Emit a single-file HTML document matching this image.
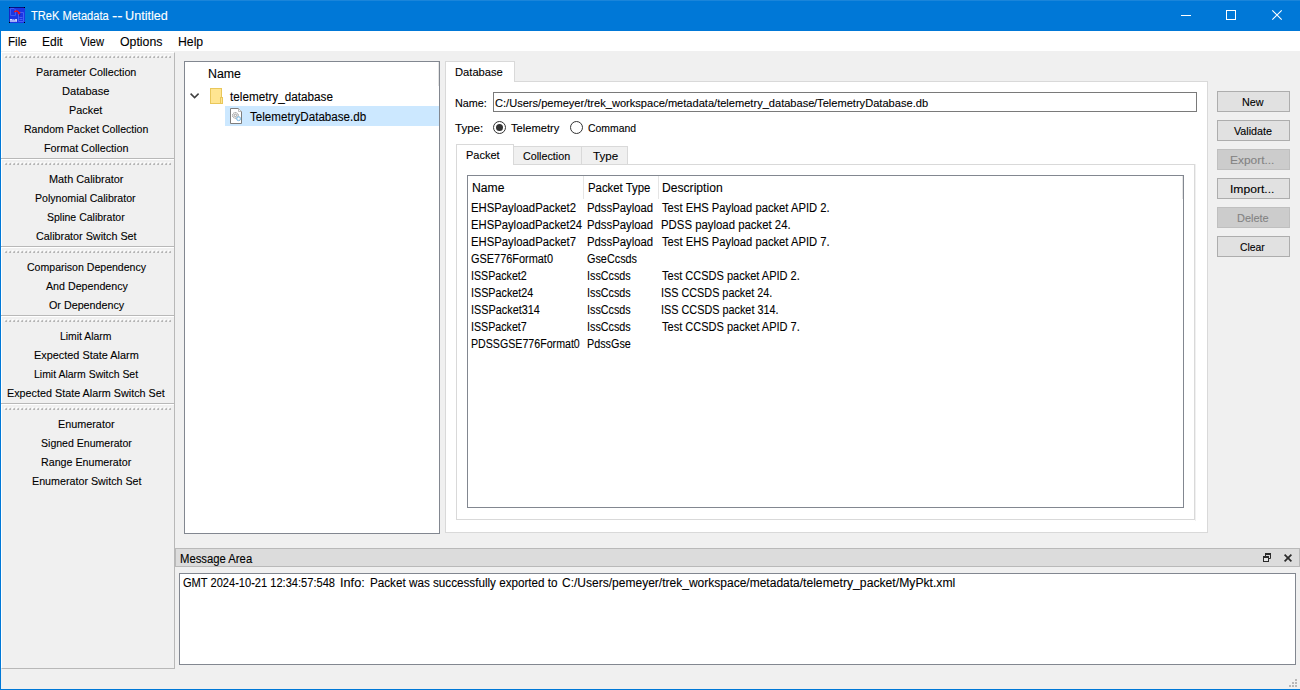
<!DOCTYPE html>
<html lang="en">
<head>
<meta charset="utf-8">
<title>TReK Metadata -- Untitled</title>
<style>
html,body{margin:0;padding:0;}
body{width:1300px;height:690px;overflow:hidden;background:#f0f0f0;position:relative;font-family:"Liberation Sans",sans-serif;font-size:12px;color:#000;}
.a{position:absolute;box-sizing:border-box;}
.t{position:absolute;white-space:pre;line-height:16px;height:16px;transform-origin:0 0;display:block;-webkit-text-stroke:0.1px currentColor;}
.g{position:absolute;white-space:pre;line-height:16px;height:16px;}
.ti{display:inline-block;white-space:pre;line-height:16px;height:16px;transform-origin:0 0;-webkit-text-stroke:0.1px currentColor;vertical-align:top;}
#title{left:0;top:0;width:1300px;height:31px;background:#0078d7;}
#menu{left:1px;top:31px;width:1299px;height:20px;background:#fff;}
#lb{left:0;top:31px;width:1px;height:659px;background:#0078d7;}
#bb{left:0;top:689px;width:1300px;height:1px;background:#0078d7;}
#side{left:1px;top:52px;width:174px;height:617px;border-right:1px solid #b8b8b8;border-bottom:1px solid #b8b8b8;border-left:1px solid #fff;border-top:1px solid #fff;}
.sep{position:absolute;left:1px;width:173px;height:2px;border-top:1px solid #b8b8b8;border-bottom:1px solid #fff;box-sizing:border-box;}
.grip{position:absolute;left:4px;width:168px;height:3px;}
#tree{left:184px;top:61px;width:256px;height:473px;background:#fff;border:1px solid #828790;}
#sel{left:225px;top:106px;width:214px;height:20px;background:#cce8ff;}
#pane{left:445px;top:81px;width:763px;height:452px;background:#fff;border:1px solid #d9d9d9;}
#tabDb{left:445px;top:61px;width:70px;height:21px;background:#fff;border:1px solid #d9d9d9;border-bottom:none;}
#inp{left:493px;top:92px;width:704px;height:20px;background:#fff;border:1px solid #7a7a7a;}
.radio{position:absolute;width:13px;height:13px;border-radius:50%;border:1px solid #333;background:#fff;box-sizing:border-box;}
#ipane{left:456px;top:164px;width:739px;height:356px;background:#fff;border:1px solid #d9d9d9;}
.itab{position:absolute;box-sizing:border-box;border:1px solid #d9d9d9;background:#f0f0f0;top:146px;height:19px;}
#tabPk{left:456px;top:144px;width:58px;height:21px;background:#fff;border:1px solid #d9d9d9;border-bottom:none;}
#table{left:467px;top:175px;width:717px;height:333px;background:#fff;border:1px solid #828790;}
.btn{position:absolute;left:1217px;width:73px;height:21px;box-sizing:border-box;background:#e1e1e1;border:1px solid #adadad;}
.btn.dis{background:#cccccc;border-color:#bfbfbf;}
#mtitle{left:175px;top:548px;width:1125px;height:19px;background:#dcdcdc;border:1px solid #b9b9b9;}
#mbox{left:179px;top:573px;width:1117px;height:92px;background:#fff;border:1px solid #828790;}
</style>
</head>
<body>
<svg width="0" height="0" style="position:absolute"><defs><pattern id="gp" x="0" y="0" width="4" height="3" patternUnits="userSpaceOnUse">
<rect x="0" y="0" width="2" height="1" fill="#f9f9f9"/><rect x="0" y="1" width="1" height="1" fill="#fdfdfd"/><rect x="1" y="1" width="1" height="1" fill="#dcdcdc"/><rect x="2" y="1" width="1" height="1" fill="#bcbcbc"/>
<rect x="1" y="2" width="1" height="1" fill="#bcbcbc"/><rect x="2" y="2" width="1" height="1" fill="#b4b4b4"/></pattern></defs></svg>
<div id="title" class="a"></div>
<div class="a" style="left:0;top:0;width:1300px;height:1px;background:#1a85da"></div>
<div id="menu" class="a"></div>
<div id="lb" class="a"></div>
<div id="bb" class="a"></div>
<div id="side" class="a"></div>
<svg class="grip" style="top:55px" width="168" height="3"><rect width="168" height="3" fill="url(#gp)"/></svg>
<div class="sep" style="top:158px"></div>
<svg class="grip" style="top:162px" width="168" height="3"><rect width="168" height="3" fill="url(#gp)"/></svg>
<div class="sep" style="top:246px"></div>
<svg class="grip" style="top:250px" width="168" height="3"><rect width="168" height="3" fill="url(#gp)"/></svg>
<div class="sep" style="top:315px"></div>
<svg class="grip" style="top:319px" width="168" height="3"><rect width="168" height="3" fill="url(#gp)"/></svg>
<div class="sep" style="top:403px"></div>
<svg class="grip" style="top:407px" width="168" height="3"><rect width="168" height="3" fill="url(#gp)"/></svg>
<div id="tree" class="a"></div>
<div id="sel" class="a"></div>
<div id="pane" class="a"></div>
<div id="tabDb" class="a"></div>
<div id="inp" class="a"></div>
<div class="radio" style="left:493px;top:121px"></div>
<div class="radio" style="left:570px;top:121px"></div>
<div id="ipane" class="a"></div>
<div class="a" style="left:1195px;top:164px;width:1px;height:357px;background:#f0f0f0"></div>
<div class="itab" style="left:513px;width:69px"></div>
<div class="itab" style="left:581px;width:47px"></div>
<div id="tabPk" class="a"></div>
<div id="table" class="a"></div>
<div class="btn" style="top:91px"></div>
<div class="btn" style="top:120px"></div>
<div class="btn dis" style="top:149px"></div>
<div class="btn" style="top:178px"></div>
<div class="btn dis" style="top:207px"></div>
<div class="btn" style="top:236px"></div>

<div id="mtitle" class="a"></div>
<div id="mbox" class="a"></div>
<!-- app icon -->
<svg class="a" style="left:9px;top:7px" width="16" height="16" viewBox="0 0 16 16">
<rect x="0" y="0" width="16" height="16" fill="#1b36e3"/>
<rect x="0" y="0" width="16" height="1" fill="#070f80"/>
<rect x="0" y="0" width="1" height="16" fill="#1428c4"/>
<rect x="0" y="0" width="1" height="1" fill="#000"/><rect x="15" y="0" width="1" height="1" fill="#000"/><rect x="0" y="15" width="1" height="1" fill="#000"/><rect x="15" y="15" width="1" height="1" fill="#000"/>
<path d="M1.500 1.500h3.500l1.500 1.500v5.500h-5z" fill="none" stroke="#3f5cf2" stroke-width="1"/>
<path d="M9.500 5.500h5v9h-5z" fill="none" stroke="#4562f3" stroke-width="1"/>
<path d="M10.500 10.500h3M10.500 12.500h3" stroke="#4562f3" stroke-width="1"/>
<path d="M10.300 7.900l1.300-0.700l-0.900 1.200z" fill="#101010"/>
<path d="M4.900 4.700C6.300 2.700 9 2.500 10.300 5.200L11.400 4.900L10.700 7.800L8.300 6.300L9.200 5.900C8.400 4.400 6.800 4.300 5.500 5.400Z" fill="#f01414"/>
<path d="M1 12h2.500v1h-2.500zM1 13.300h5v1.400h-5z" fill="#cfd6ff"/>
<rect x="6.300" y="12" width="1.500" height="2.800" fill="#fff"/>
<rect x="4" y="12.300" width="1.500" height="0.800" fill="#b8c2ff"/>
</svg>
<!-- window controls -->
<svg class="a" style="left:1170px;top:0" width="130" height="31" viewBox="0 0 130 31">
<path d="M11 15.5h10" stroke="#fff" stroke-width="1"/>
<rect x="56.5" y="10.5" width="9" height="9" fill="none" stroke="#fff" stroke-width="1"/>
<path d="M102.3 10.3l9.4 9.4M111.7 10.3l-9.4 9.4" stroke="#fff" stroke-width="1.1"/>
</svg>
<!-- tree icons -->
<svg class="a" style="left:188px;top:86px" width="60" height="40" viewBox="0 0 60 40">
<path d="M2.6 7.6l4 4l4-4" fill="none" stroke="#404040" stroke-width="1.5"/>
<rect x="22.5" y="2.5" width="11" height="15" fill="#ffe591" stroke="#e9c75a" stroke-width="1"/>
<rect x="32.5" y="11.5" width="2" height="6" fill="#ffe591" stroke="#e9c75a" stroke-width="1"/>
<path d="M42.500 22.500h8l3 3v12h-11z" fill="#fff" stroke="#7d7d7d" stroke-width="1"/>
<path d="M50.500 22.500v3h3" fill="#f6f6f6" stroke="#a8a8a8" stroke-width="0.800"/>
<circle cx="47.400" cy="29.400" r="2.900" fill="#ececec" stroke="#8c8c8c" stroke-width="0.900" stroke-dasharray="1.300 0.500"/>
<circle cx="47.400" cy="29.400" r="1.200" fill="#fafafa" stroke="#8c8c8c" stroke-width="0.700"/>
<circle cx="50.600" cy="32.700" r="2" fill="#dbeefb" stroke="#73b4e2" stroke-width="0.900"/>
<circle cx="50.600" cy="32.700" r="0.700" fill="#fff"/>
</svg>
<!-- header separators -->
<div class="a" style="left:438px;top:62px;width:1px;height:24px;background:#e5e5e5"></div>
<div class="a" style="left:583px;top:176px;width:1px;height:23px;background:#e5e5e5"></div>
<div class="a" style="left:658px;top:176px;width:1px;height:23px;background:#e5e5e5"></div>
<div class="a" style="left:1182px;top:176px;width:1px;height:23px;background:#e5e5e5"></div>
<!-- radio dot -->
<div class="a" style="left:496px;top:124px;width:7px;height:7px;border-radius:50%;background:#333"></div>
<!-- message area icons -->
<svg class="a" style="left:1260px;top:550px" width="36" height="16" viewBox="0 0 36 16">
<path d="M5.500 6v-2.500h5v5h-1.500" fill="none" stroke="#2b2b2b" stroke-width="1"/>
<rect x="5" y="3" width="6" height="2" fill="#2b2b2b"/>
<rect x="3.500" y="6.500" width="5" height="5" fill="#e6e6e6" stroke="#2b2b2b" stroke-width="1"/>
<rect x="3" y="6" width="6" height="2" fill="#2b2b2b"/>
<path d="M24.600 4.600l6.800 6.800M31.400 4.600l-6.800 6.800" stroke="#2b2b2b" stroke-width="1.700"/>
</svg>
<!-- size grip -->
<svg class="a" style="left:1286px;top:676px" width="12" height="12" viewBox="0 0 12 12">
<g fill="#b8b8b8"><rect x="9" y="3" width="2" height="2"/><rect x="6" y="6" width="2" height="2"/><rect x="9" y="6" width="2" height="2"/><rect x="3" y="9" width="2" height="2"/><rect x="6" y="9" width="2" height="2"/><rect x="9" y="9" width="2" height="2"/></g>
</svg>

<div class="g" style="left:30.93px;top:8.30px"><span class="ti" style="color:#fff;transform:scaleX(0.9246);margin-right:-6.10px">TReK Metadata </span><span class="ti" style="color:#fff;transform:scaleX(1.3364);margin-right:1.28px">-- </span><span class="ti" style="color:#fff;transform:scaleX(1.0544)">Untitled</span></div>
<span class="t" style="left:8.39px;top:33.80px;transform:scaleX(0.9714)">File</span>
<span class="t" style="left:42.26px;top:33.80px;transform:scaleX(1.0009)">Edit</span>
<span class="t" style="left:79.50px;top:33.80px;transform:scaleX(0.9291)">View</span>
<span class="t" style="left:119.92px;top:33.80px;transform:scaleX(1.0268)">Options</span>
<span class="t" style="left:177.54px;top:33.80px;transform:scaleX(1.0191)">Help</span>
<span class="t" style="left:36.46px;top:63.50px;font-size:11px;transform:scaleX(0.9769)">Parameter Collection</span>
<span class="t" style="left:62.23px;top:82.50px;font-size:11px;transform:scaleX(1.0091)">Database</span>
<span class="t" style="left:69.45px;top:101.50px;font-size:11px;transform:scaleX(0.9876)">Packet</span>
<span class="t" style="left:24.28px;top:120.50px;font-size:11px;transform:scaleX(0.9591)">Random Packet Collection</span>
<span class="t" style="left:44.46px;top:139.50px;font-size:11px;transform:scaleX(0.9797)">Format Collection</span>
<span class="t" style="left:48.65px;top:170.50px;font-size:11px;transform:scaleX(0.9895)">Math Calibrator</span>
<span class="t" style="left:35.37px;top:189.50px;font-size:11px;transform:scaleX(0.9621)">Polynomial Calibrator</span>
<span class="t" style="left:47.17px;top:208.50px;font-size:11px;transform:scaleX(0.9553)">Spline Calibrator</span>
<span class="t" style="left:36.00px;top:227.50px;font-size:11px;transform:scaleX(0.9792)">Calibrator Switch Set</span>
<span class="t" style="left:27.11px;top:258.50px;font-size:11px;transform:scaleX(0.9587)">Comparison Dependency</span>
<span class="t" style="left:45.50px;top:277.50px;font-size:11px;transform:scaleX(0.9704)">And Dependency</span>
<span class="t" style="left:49.00px;top:296.50px;font-size:11px;transform:scaleX(0.9761)">Or Dependency</span>
<span class="t" style="left:60.49px;top:327.50px;font-size:11px;transform:scaleX(0.9463)">Limit Alarm</span>
<span class="t" style="left:33.65px;top:346.50px;font-size:11px;transform:scaleX(0.9899)">Expected State Alarm</span>
<span class="t" style="left:33.68px;top:365.50px;font-size:11px;transform:scaleX(0.9514)">Limit Alarm Switch Set</span>
<span class="t" style="left:7.26px;top:384.50px;font-size:11px;transform:scaleX(0.9808)">Expected State Alarm Switch Set</span>
<span class="t" style="left:57.56px;top:415.50px;font-size:11px;transform:scaleX(0.9831)">Enumerator</span>
<span class="t" style="left:41.07px;top:434.50px;font-size:11px;transform:scaleX(0.9589)">Signed Enumerator</span>
<span class="t" style="left:40.57px;top:453.50px;font-size:11px;transform:scaleX(0.9704)">Range Enumerator</span>
<span class="t" style="left:31.66px;top:472.50px;font-size:11px;transform:scaleX(0.9734)">Enumerator Switch Set</span>
<span class="t" style="left:208.33px;top:65.70px;transform:scaleX(1.0299)">Name</span>
<span class="t" style="left:229.80px;top:88.60px;transform:scaleX(0.9770)">telemetry_database</span>
<span class="t" style="left:250.02px;top:108.80px;transform:scaleX(0.9674)">TelemetryDatabase.db</span>
<span class="t" style="left:455.13px;top:63.80px;font-size:11px;transform:scaleX(1.0157)">Database</span>
<span class="t" style="left:454.76px;top:94.80px;font-size:11px;transform:scaleX(0.9821)">Name:</span>
<div class="g" style="left:494.88px;top:94.80px"><span class="ti" style="font-size:11px;transform:scaleX(1.0065);margin-right:2.21px">C:/Users/pemeyer/trek_workspace/metadata/telemetry_database</span><span class="ti" style="font-size:11px;transform:scaleX(1.0083)">/TelemetryDatabase.db</span></div>
<span class="t" style="left:455.42px;top:120.20px;font-size:11px;transform:scaleX(1.0490)">Type:</span>
<span class="t" style="left:510.93px;top:120.20px;font-size:11px;transform:scaleX(1.0125)">Telemetry</span>
<span class="t" style="left:588.01px;top:120.20px;font-size:11px;transform:scaleX(0.9474)">Command</span>
<span class="t" style="left:466.34px;top:147.00px;font-size:11px;transform:scaleX(0.9998)">Packet</span>
<span class="t" style="left:523.00px;top:148.00px;font-size:11px;transform:scaleX(0.9752)">Collection</span>
<span class="t" style="left:592.82px;top:148.00px;font-size:11px;transform:scaleX(1.0547)">Type</span>
<span class="t" style="left:471.85px;top:179.70px;transform:scaleX(1.0135)">Name</span>
<span class="t" style="left:587.71px;top:179.70px;transform:scaleX(0.9472)">Packet Type</span>
<span class="t" style="left:662.45px;top:179.70px;transform:scaleX(1.0101)">Description</span>
<span class="t" style="left:470.52px;top:199.80px;transform:scaleX(0.9429)">EHSPayloadPacket2</span>
<span class="t" style="left:586.61px;top:199.80px;transform:scaleX(0.9440)">PdssPayload</span>
<span class="t" style="left:661.82px;top:199.80px;transform:scaleX(0.9339)">Test EHS Payload packet APID 2.</span>
<span class="t" style="left:470.52px;top:216.80px;transform:scaleX(0.9398)">EHSPayloadPacket24</span>
<span class="t" style="left:586.61px;top:216.80px;transform:scaleX(0.9440)">PdssPayload</span>
<span class="t" style="left:661.11px;top:216.80px;transform:scaleX(0.9478)">PDSS payload packet 24.</span>
<span class="t" style="left:470.52px;top:233.80px;transform:scaleX(0.9429)">EHSPayloadPacket7</span>
<span class="t" style="left:586.61px;top:233.80px;transform:scaleX(0.9440)">PdssPayload</span>
<span class="t" style="left:661.82px;top:233.80px;transform:scaleX(0.9339)">Test EHS Payload packet APID 7.</span>
<span class="t" style="left:470.89px;top:250.80px;transform:scaleX(0.9105)">GSE776Format0</span>
<span class="t" style="left:586.99px;top:250.80px;transform:scaleX(0.9042)">GseCcsds</span>
<span class="t" style="left:470.57px;top:267.80px;transform:scaleX(0.8894)">ISSPacket2</span>
<span class="t" style="left:586.66px;top:267.80px;transform:scaleX(0.8974)">IssCcsds</span>
<span class="t" style="left:661.83px;top:267.80px;transform:scaleX(0.9180)">Test CCSDS packet APID 2.</span>
<span class="t" style="left:470.56px;top:284.80px;transform:scaleX(0.8982)">ISSPacket24</span>
<span class="t" style="left:586.66px;top:284.80px;transform:scaleX(0.8974)">IssCcsds</span>
<span class="t" style="left:661.15px;top:284.80px;transform:scaleX(0.9022)">ISS CCSDS packet 24.</span>
<span class="t" style="left:470.55px;top:301.80px;transform:scaleX(0.9049)">ISSPacket314</span>
<span class="t" style="left:586.66px;top:301.80px;transform:scaleX(0.8974)">IssCcsds</span>
<span class="t" style="left:661.15px;top:301.80px;transform:scaleX(0.9036)">ISS CCSDS packet 314.</span>
<span class="t" style="left:470.57px;top:318.80px;transform:scaleX(0.8894)">ISSPacket7</span>
<span class="t" style="left:586.66px;top:318.80px;transform:scaleX(0.8974)">IssCcsds</span>
<span class="t" style="left:661.83px;top:318.80px;transform:scaleX(0.9180)">Test CCSDS packet APID 7.</span>
<span class="t" style="left:470.57px;top:335.80px;transform:scaleX(0.8865)">PDSSGSE776Format0</span>
<span class="t" style="left:586.66px;top:335.80px;transform:scaleX(0.8992)">PdssGse</span>
<span class="t" style="left:1241.86px;top:93.80px;font-size:11px;transform:scaleX(0.9774)">New</span>
<span class="t" style="left:1233.60px;top:122.80px;font-size:11px;transform:scaleX(0.9769)">Validate</span>
<span class="t" style="left:1230.27px;top:151.80px;font-size:11px;color:#838383;transform:scaleX(1.0842)">Export...</span>
<span class="t" style="left:1230.25px;top:180.80px;font-size:11px;transform:scaleX(1.1016)">Import...</span>
<span class="t" style="left:1236.54px;top:209.80px;font-size:11px;color:#838383;transform:scaleX(0.9970)">Delete</span>
<span class="t" style="left:1240.21px;top:238.80px;font-size:11px;transform:scaleX(0.9410)">Clear</span>
<span class="t" style="left:179.92px;top:550.80px;transform:scaleX(0.9410)">Message Area</span>
<div class="g" style="left:183.28px;top:574.60px"><span class="ti" style="transform:scaleX(0.9235);margin-right:-14.02px">GMT 2024-10-21 12:34:57:548  </span><span class="ti" style="transform:scaleX(1.0596);margin-right:-0.14px">Info:  </span><span class="ti" style="transform:scaleX(0.9732);margin-right:-4.94px">Packet was successfully exported to </span><span class="ti" style="transform:scaleX(1.0015);margin-right:0.60px">C:/Users/pemeyer/trek_workspace/metadata/</span><span class="ti" style="transform:scaleX(1.0151)">telemetry_packet/MyPkt.xml</span></div>
</body>
</html>
